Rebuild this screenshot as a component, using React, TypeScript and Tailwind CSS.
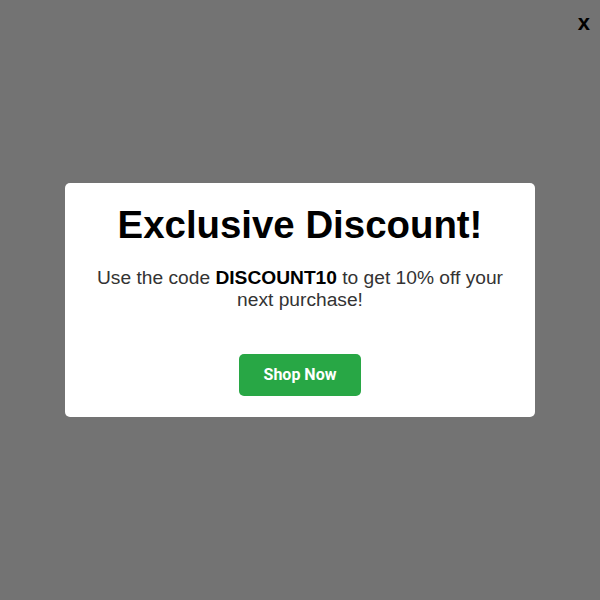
export default function App() {
    return (
        <div className="relative w-[600px] h-[600px] bg-[#737373] flex items-center justify-center font-['Liberation_Sans',Arial,sans-serif]">
            <button className="absolute top-[12px] right-[10px] text-[22px] font-bold leading-none text-black">
                x
            </button>

            {/* Popup */}
            <div className="w-[470px] bg-white rounded-[5px] px-5 pt-5 pb-[21px] text-center">
                <h2 className="text-[38.4px] font-bold text-black leading-[1.15]">Exclusive Discount!</h2>
                <p className="mt-[20px] text-[19.2px] leading-[22px] text-[#333]">
                    Use the code <strong className="text-black">DISCOUNT10</strong> to get 10% off your next purchase!
                </p>
                <button className="mt-[43px] bg-[#28a745] text-white font-bold text-[16px] leading-[18px] px-[25px] py-3 rounded-[5px] font-['Roboto',sans-serif]">
                    Shop Now
                </button>
            </div>
        </div>
    );
}
